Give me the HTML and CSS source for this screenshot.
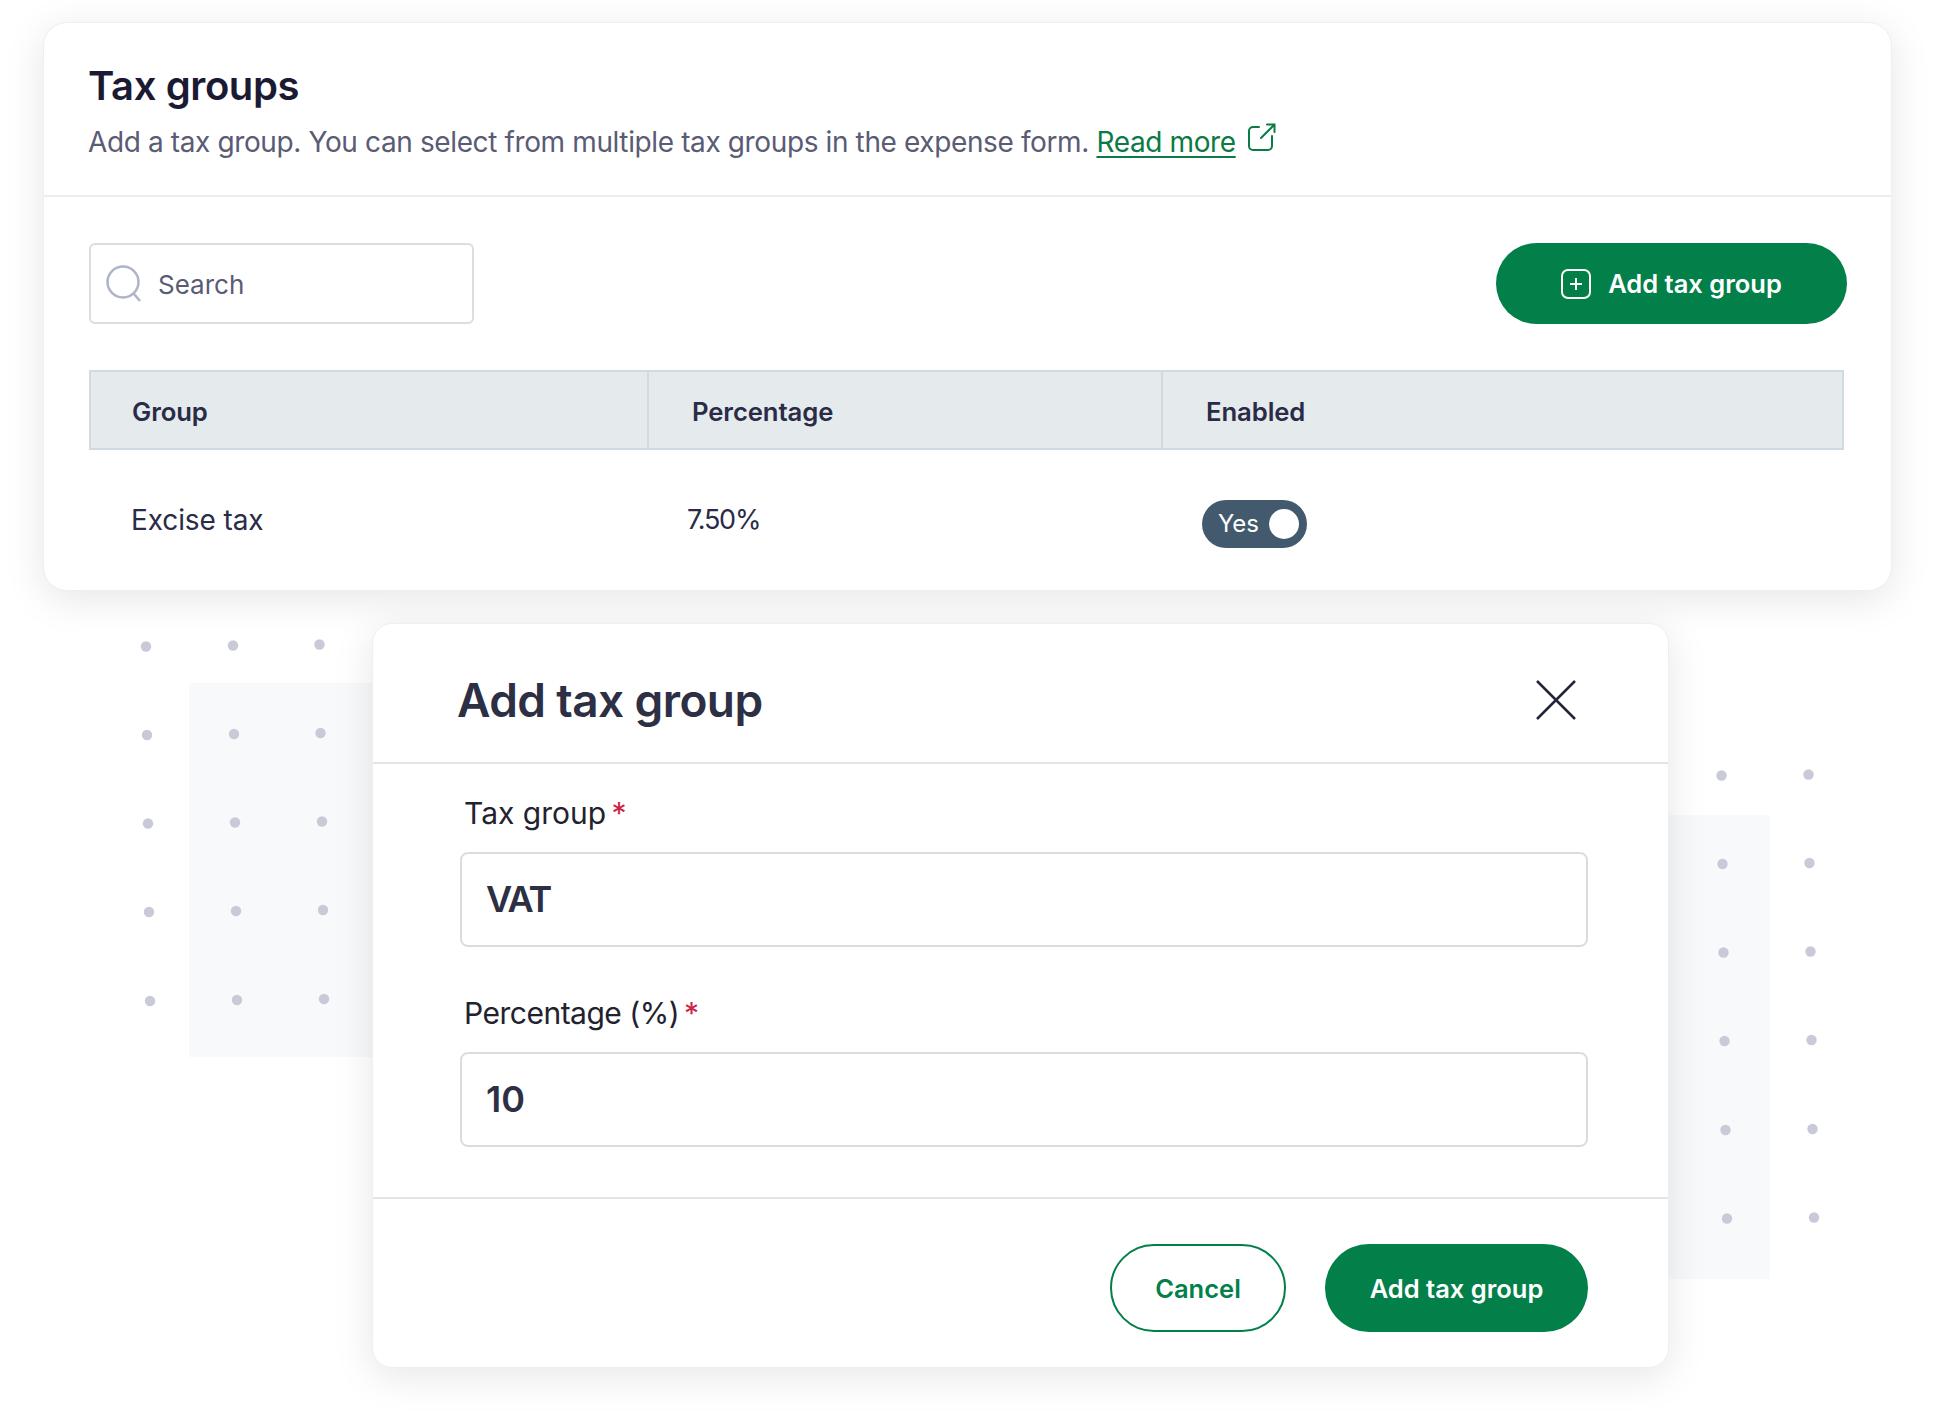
FILE: index.html
```html
<!DOCTYPE html>
<html lang="en">

<head>
    <meta charset="UTF-8">
    <title>Tax groups</title>
    <link rel="stylesheet" href="styles.css">
</head>

<body>
    <!-- background dots and pale panels behind the modal -->
    <svg class="backdrop" width="1944" height="1411" viewBox="0 0 1944 1411">
        <rect x="189" y="683" width="240" height="374" fill="#f8f9fb" />
        <rect x="1600" y="815" width="170" height="464" fill="#f8f9fb" />
        <g fill="#c9cad8">
            <circle cx="146" cy="646.5" r="5.200" /><circle cx="233" cy="645.5" r="5.200" /><circle cx="319.500" cy="644.500" r="5.200" />
            <circle cx="147" cy="735" r="5.200" /><circle cx="234" cy="734" r="5.200" /><circle cx="320.500" cy="733" r="5.200" />
            <circle cx="148" cy="823.500" r="5.200" /><circle cx="235" cy="822.500" r="5.200" /><circle cx="322" cy="821.500" r="5.200" />
            <circle cx="149" cy="912" r="5.200" /><circle cx="236" cy="911" r="5.200" /><circle cx="323" cy="910" r="5.200" />
            <circle cx="150" cy="1001" r="5.200" /><circle cx="237" cy="1000" r="5.200" /><circle cx="324" cy="999" r="5.200" />
            <circle cx="1721.500" cy="775.500" r="5.200" /><circle cx="1808.500" cy="774.500" r="5.200" />
            <circle cx="1722.500" cy="864" r="5.200" /><circle cx="1809.500" cy="863" r="5.200" />
            <circle cx="1723.500" cy="952.500" r="5.200" /><circle cx="1810.500" cy="951.500" r="5.200" />
            <circle cx="1724.500" cy="1041" r="5.200" /><circle cx="1811.500" cy="1040" r="5.200" />
            <circle cx="1725.500" cy="1130" r="5.200" /><circle cx="1812.500" cy="1129" r="5.200" />
            <circle cx="1727" cy="1218.500" r="5.200" /><circle cx="1814" cy="1217.500" r="5.200" />
        </g>
    </svg>

    <div class="page">
        <section class="card">
            <header class="card-head">
                <h1>Tax groups</h1>
                <p>Add a tax group. You can select from multiple tax groups in the expense form.
                    <a href="#">Read more</a>
                    <svg class="ext-icon" width="30" height="29" viewBox="0 0 30 29" fill="none" stroke="#0b7a44" stroke-width="2" stroke-linecap="round">
                        <path d="M12 4H6a4 4 0 0 0-4 4v15a4 4 0 0 0 4 4h15a4 4 0 0 0 4-4V13" />
                        <path d="M14 15 27 2M20 1.500h7.500V9" />
                    </svg>
                </p>
            </header>
            <div class="card-body">
                <div class="toolbar">
                    <div class="search">
                        <svg width="36" height="38" viewBox="0 0 36 38" fill="none" stroke="#b0b4c8" stroke-width="2.500">
                            <circle cx="17" cy="17" r="15.500" />
                            <path d="M28 29l6 7" />
                        </svg>
                        <span>Search</span>
                    </div>
                    <button class="btn btn-wide">
                        <svg width="30" height="30" viewBox="0 0 30 30" fill="none" stroke="#fff" stroke-width="2">
                            <rect x="1" y="1" width="28" height="28" rx="6" />
                            <path d="M15 9v12M9 15h12" />
                        </svg>
                        Add tax group
                    </button>
                </div>
                <table class="groups">
                    <thead>
                        <tr>
                            <th class="col-group">Group</th>
                            <th class="col-pct">Percentage</th>
                            <th>Enabled</th>
                        </tr>
                    </thead>
                    <tbody>
                        <tr>
                            <td>Excise tax</td>
                            <td class="pct">7.50%</td>
                            <td class="enabled"><span class="toggle">Yes<i></i></span></td>
                        </tr>
                    </tbody>
                </table>
            </div>
        </section>

        <section class="modal">
            <header class="modal-head">
                <h2>Add tax group</h2>
                <svg width="40" height="40" viewBox="0 0 40 40" fill="none" stroke="#23253a" stroke-width="2.500">
                    <path d="M1 1l38 38M39 1 1 39" />
                </svg>
            </header>
            <div class="modal-body">
                <div class="field">
                    <label>Tax group <b>*</b></label>
                    <div class="input input-tight">VAT</div>
                </div>
                <div class="field">
                    <label class="label-tight">Percentage (%) <b>*</b></label>
                    <div class="input">10</div>
                </div>
            </div>
            <footer class="modal-foot">
                <button class="btn btn-outline">Cancel</button>
                <button class="btn btn-save">Add tax group</button>
            </footer>
        </section>
    </div>
</body>

</html>
```

FILE: styles.css
```css
html,
body {
    margin: 0;
    padding: 0;
    background-color: #fff;
}

body {
    position: relative;
    width: 1944px;
    height: 1411px;
    overflow: hidden;
    font-family: Inter, "Liberation Sans", sans-serif;
}

.backdrop {
    position: absolute;
    top: 0;
    left: 0;
}

.page {
    position: relative;
    padding: 22px 0 0 43px;
}

.card {
    width: 1849px;
    height: 569px;
    box-sizing: border-box;
    background-color: #fff;
    border: 1px solid #efeff1;
    border-radius: 24px;
    box-shadow: 0 8px 40px rgba(0, 0, 0, 0.1);
}

.card-head {
    height: 174px;
    box-sizing: border-box;
    padding: 39px 44px 0;
    border-bottom: 2px solid #ecedf1;
}

.card-head h1 {
    margin: 0;
    font-size: 40px;
    line-height: 48px;
    font-weight: 600;
    letter-spacing: -0.4px;
    color: #1b1a33;
}

.card-head p {
    margin: 12px 0 0;
    font-size: 28px;
    line-height: 40px;
    letter-spacing: -0.38px;
    color: #5a5b75;
}

.card-head a {
    color: #0b7a44;
    text-decoration: underline;
    text-underline-offset: 4px;
}

.ext-icon {
    margin-left: 4px;
}

.card-body {
    padding: 46px 0 0 45px;
}

.toolbar {
    display: flex;
    justify-content: space-between;
    width: 1758px;
}

.search {
    width: 385px;
    height: 81px;
    box-sizing: border-box;
    display: flex;
    align-items: center;
    gap: 16px;
    padding: 0 0 0 15px;
    border: 2px solid #dcdce2;
    border-radius: 6px;
    font-size: 26px;
    color: #5a5b75;
}

.search span {
    padding-top: 2px;
}

.btn {
    border: none;
    border-radius: 44px;
    background-color: #037f4a;
    color: #fff;
    font-family: inherit;
    font-size: 25.5px;
    font-weight: 600;
    cursor: pointer;
}

.btn-wide {
    width: 351px;
    height: 81px;
    display: flex;
    align-items: center;
    justify-content: center;
    gap: 17px;
}

.groups {
    width: 1755px;
    margin-top: 46px;
    table-layout: fixed;
    border-collapse: collapse;
    color: #2a2c47;
    font-size: 28px;
    letter-spacing: -0.1px;
}

.groups th {
    height: 73px;
    padding: 3px 0 0 43px;
    text-align: left;
    font-weight: 600;
    font-size: 25.7px;
    background-color: #e5eaed;
    border: 2px solid #d0dae0;
}

.groups th.col-group {
    width: 515px;
    padding-left: 41px;
}

.col-pct {
    width: 469px;
}

.groups td {
    padding: 53px 0 0 41px;
    vertical-align: top;
}

.groups td.pct {
    padding-left: 39px;
    font-size: 27px;
    letter-spacing: -1.200px;
}

.groups td.enabled {
    padding: 50px 0 0 40px;
}

.toggle {
    position: relative;
    display: block;
    width: 105px;
    height: 48px;
    box-sizing: border-box;
    padding-left: 16px;
    border-radius: 24px;
    background-color: #435a6e;
    color: #fff;
    font-size: 24px;
    line-height: 48px;
}

.toggle i {
    position: absolute;
    top: 9px;
    right: 8px;
    width: 30px;
    height: 30px;
    border-radius: 50%;
    background-color: #fff;
}

.modal {
    width: 1297px;
    height: 745px;
    margin: 32px 0 0 329px;
    box-sizing: border-box;
    background-color: #fff;
    border: 1px solid #efeff1;
    border-radius: 20px;
    box-shadow: 0 8px 40px rgba(0, 0, 0, 0.1);
}

.modal-head {
    height: 140px;
    box-sizing: border-box;
    display: flex;
    align-items: center;
    justify-content: space-between;
    padding: 14px 92px 0 84px;
    border-bottom: 2px solid #e4e4e6;
}

.modal-head h2 {
    margin: 0;
    font-size: 46px;
    font-weight: 600;
    letter-spacing: -0.6px;
    color: #2d3044;
}

.modal-body {
    height: 435px;
    box-sizing: border-box;
    padding: 31px 80px 0 87px;
    border-bottom: 2px solid #e4e4e6;
}

.field {
    margin-bottom: 48px;
}

.field label {
    display: block;
    margin: 0 0 21px 4px;
    font-size: 30px;
    line-height: 36px;
    color: #22222e;
}

.field label.label-tight {
    letter-spacing: -0.5px;
}

.field label b {
    margin-left: -3px;
    font-weight: 400;
    color: #cc2244;
}

.input {
    height: 95px;
    box-sizing: border-box;
    padding-left: 24px;
    border: 2px solid #dcdcdc;
    border-radius: 8px;
    font-size: 36px;
    line-height: 91px;
    font-weight: 600;
    color: #2d3044;
}

.input-tight {
    letter-spacing: -2px;
}

.modal-foot {
    display: flex;
    justify-content: flex-end;
    gap: 39px;
    padding: 45px 80px 0 0;
}

.btn-outline {
    width: 176px;
    height: 88px;
    background-color: #fff;
    border: 2px solid #037f4a;
    color: #037f4a;
}

.btn-save {
    width: 263px;
    height: 88px;
}
```
